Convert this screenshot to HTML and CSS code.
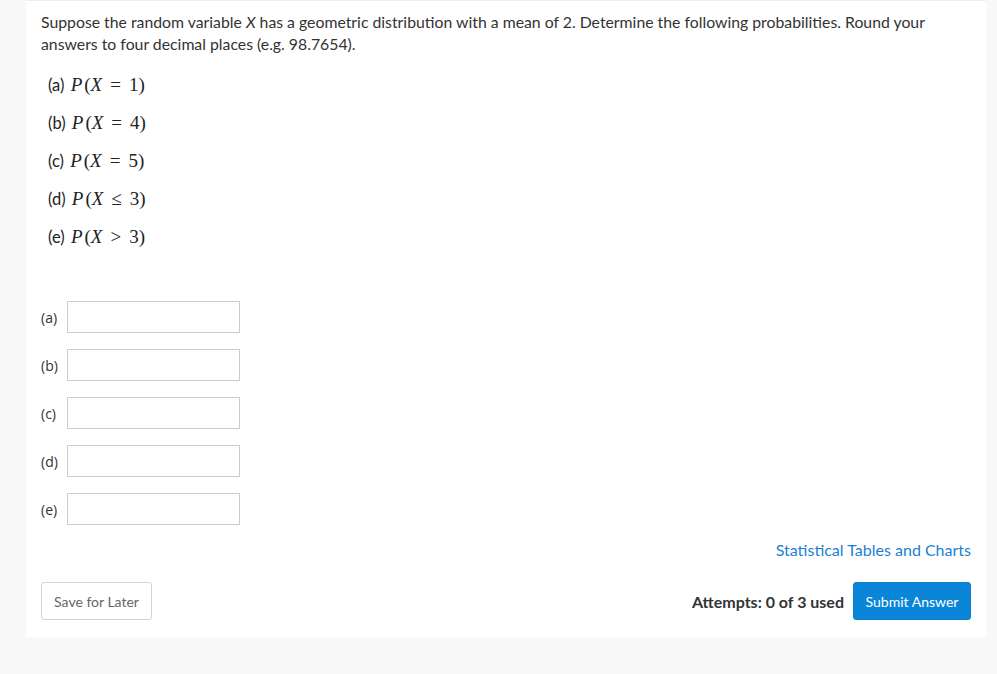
FILE: index.html
```html
<!DOCTYPE html>
<html lang="en">
  <head>
    <meta charset="UTF-8" />
    <title>Question</title>
    <link rel="stylesheet" href="styles.css">
  </head>
  <body>
    <div class="card">
      <p class="prompt">
        Suppose the random variable <i>X</i> has a geometric distribution with a mean of 2. Determine the following probabilities. Round your answers to four decimal places (e.g. 98.7654).
      </p>

      <div class="parts">
        <div class="part">(a) <span class="math"><i>P</i><span class="paren">(</span><i>X</i><span class="op">=</span>1)</span></div>
        <div class="part">(b) <span class="math"><i>P</i><span class="paren">(</span><i>X</i><span class="op">=</span>4)</span></div>
        <div class="part">(c) <span class="math"><i>P</i><span class="paren">(</span><i>X</i><span class="op">=</span>5)</span></div>
        <div class="part">(d) <span class="math"><i>P</i><span class="paren">(</span><i>X</i><span class="op">≤</span>3)</span></div>
        <div class="part">(e) <span class="math"><i>P</i><span class="paren">(</span><i>X</i><span class="op">&gt;</span>3)</span></div>
      </div>

      <div class="answers">
        <label class="answer-row"><span class="answer-label">(a)</span><input type="text" /></label>
        <label class="answer-row"><span class="answer-label">(b)</span><input type="text" /></label>
        <label class="answer-row"><span class="answer-label">(c)</span><input type="text" /></label>
        <label class="answer-row"><span class="answer-label">(d)</span><input type="text" /></label>
        <label class="answer-row"><span class="answer-label">(e)</span><input type="text" /></label>
      </div>

      <div class="links">
        <a href="#">Statistical Tables and Charts</a>
      </div>

      <div class="actions">
        <button class="save-btn">Save for Later</button>
        <div class="submit-group">
          <span class="attempts">Attempts: 0 of 3 used</span>
          <button class="submit-btn">Submit Answer</button>
        </div>
      </div>
    </div>
  </body>
</html>
```

FILE: styles.css
```css
* {
  box-sizing: border-box;
}

body {
  margin: 0;
  background: #f8f8f8;
  font-family: Lato, "Liberation Sans", sans-serif;
  color: #333;
}

.card {
  background: white;
  width: 960px;
  margin-left: 26px;
  border-top: 1px solid #eee;
  padding: 10px 15px 17px;
}

.prompt {
  margin: 0;
  font-size: 15.8px;
  line-height: 22px;
}

.parts {
  margin-top: 11px;
  padding-left: 7px;
}

.part {
  height: 38px;
  line-height: 38px;
  font-size: 16.5px;
  color: #222;
}

.math {
  margin-left: 2px;
  font-family: "Liberation Serif", "Times New Roman", serif;
  font-size: 19px;
}

.math .paren {
  padding-left: 2px;
}

.math .op {
  padding: 0 8px;
}

.answers {
  margin-top: 45px;
  display: flex;
  flex-direction: column;
  gap: 16px;
}

.answer-row {
  display: flex;
  align-items: center;
}

.answer-label {
  width: 26px;
  font-family: "Open Sans", sans-serif;
  font-size: 14px;
}

.answer-row input {
  width: 173px;
  height: 32px;
  margin: 0;
  border: 1px solid #ccc;
  border-radius: 0;
}

.links {
  text-align: right;
  margin-top: 14px;
  line-height: 22px;
}

.links a {
  color: #1a7fd4;
  text-decoration: none;
  font-size: 16px;
}

.actions {
  display: flex;
  justify-content: space-between;
  align-items: center;
  margin-top: 21px;
}

.submit-group {
  display: flex;
  align-items: center;
  gap: 9px;
}

.attempts {
  font-weight: bold;
  font-size: 16px;
}

button {
  font-family: Lato, "Liberation Sans", sans-serif;
  font-size: 14px;
  height: 38px;
  border-radius: 3px;
  cursor: pointer;
}

.save-btn {
  width: 111px;
  background: white;
  border: 1px solid #d4d4d4;
  color: #666;
}

.submit-btn {
  width: 118px;
  background: #0a85d8;
  border: 1px solid #0a7fcf;
  color: white;
}
```
